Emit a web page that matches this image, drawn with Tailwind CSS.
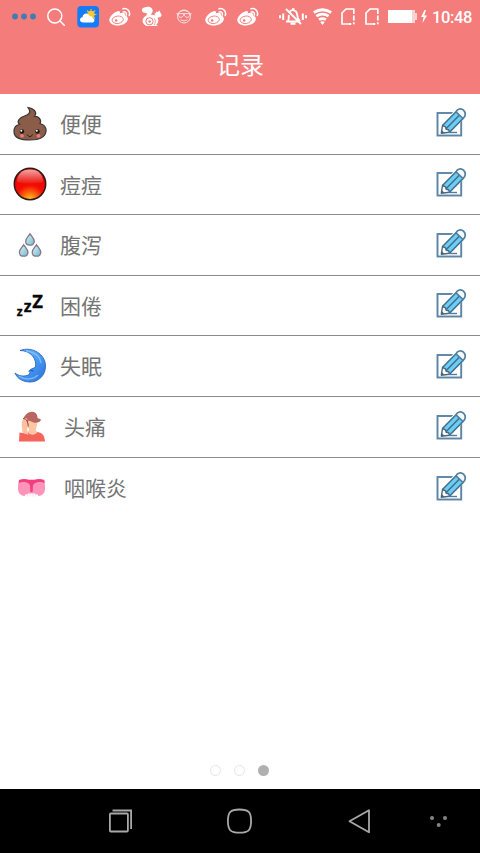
<!DOCTYPE html>
<html lang="zh-CN">
<head>
<meta charset="utf-8">
<title>记录</title>
<script src="https://cdn.jsdelivr.net/npm/@tailwindcss/browser@4"></script>
</head>
<body class="w-[480px] h-[853px] overflow-hidden bg-white flex flex-col font-['Roboto','Noto_Sans_CJK_SC',sans-serif]">
<svg class="absolute size-0" aria-hidden="true">
  <defs>
    <symbol id="weibo" viewBox="0 0 22 20">
      <path fill="#fff" d="M8.700 4.300C10.500 3.600 11.500 4.800 11 6.300c3-1.100 5.600-.6 4.900 1.900 6 2 2.600 10.300-7.400 10.300C3.500 18.500.3 16 .3 13 .3 9.500 5 5.300 8.700 4.300z"/>
      <ellipse cx="8.700" cy="12.800" rx="5.600" ry="3.700" fill="none" stroke="#f47c7b" stroke-width=".9" transform="rotate(-8 8.700 12.800)"/>
      <circle cx="7.200" cy="13.500" r="1.300" fill="#f47c7b"/>
      <path d="M14 1.800c4.500-1 7.500 2.600 6.300 6.700M14.300 4.900c2.200-.4 3.600 1.100 3 3" fill="none" stroke="#fff" stroke-width="1.500" stroke-linecap="round"/>
    </symbol>
    <symbol id="sim" viewBox="0 0 14 17">
      <path d="M12.800 6V1H5L1 5v11h7.500" fill="none" stroke="#fff" stroke-width="1.700" stroke-linejoin="round"/>
      <path d="M12.800 7.500v5M12.800 14.300v2M8 16h2.300" stroke="#fff" stroke-width="1.800"/>
    </symbol>
    <symbol id="edit" viewBox="0 0 32 32">
      <rect x="2.500" y="6" width="23.700" height="22.500" fill="#fff" stroke="#5b84a5" stroke-width="1.900"/>
      <path d="M5.500 19L20 3l10 7L15.500 26.500z" fill="#fff"/>
      <path d="M7.500 19L21 5l7 6.500-13.500 14-2.500-2-2-2.500z" fill="#6dcdf5"/>
      <path d="M7.500 18.500L21 4.800M14.500 25.300L28 11.500M10.500 22.300L24.500 8" fill="none" stroke="#41718f" stroke-width="1.600"/>
      <path d="M7.500 18.500L6.300 26.200l8.200-1-.8-2.400-2.500-.5-.7-2.500z" fill="#fff" stroke="#49697f" stroke-width="1.400" stroke-linejoin="round"/>
      <path d="M6.300 26.200l.5-3.200 2.500 2.700z" fill="#41647f"/>
      <path d="M21 4.800c1.500-3 5-3.900 7.500-1.600 2.700 2.500 2.200 6.300-.5 8.300z" fill="#f2f9fc" stroke="#527e9d" stroke-width="1.700"/>
      <path d="M14 25.500h8" stroke="#527b9c" stroke-width="1.400"/>
    </symbol>
    <linearGradient id="drop" x2="1" y2="1"><stop stop-color="#dff6f8"/><stop offset="1" stop-color="#6fb9c9"/></linearGradient>
    <linearGradient id="moon" x1="0" y1="0" x2="1" y2="1"><stop stop-color="#79bcff"/><stop offset=".5" stop-color="#4a9bf5"/><stop offset="1" stop-color="#2a70d8"/></linearGradient>
    <radialGradient id="ball" cx=".5" cy="1" r=".95"><stop stop-color="#ffc928"/><stop offset=".2" stop-color="#fb7a10"/><stop offset=".48" stop-color="#f50d03"/><stop offset="1" stop-color="#d00"/></radialGradient>
    <linearGradient id="shine" x2="0" y2="1"><stop stop-color="#fff" stop-opacity=".65"/><stop offset="1" stop-color="#fff" stop-opacity=".05"/></linearGradient>
    <path id="tear" d="M0-5.700C1.500-3.300 4.300-.8 4.300 1.800 4.300 4.200 2.400 5.700 0 5.700S-4.300 4.200-4.300 1.800C-4.300-.8-1.500-3.300 0-5.700z" fill="url(#drop)" stroke="#85768e" stroke-width="1.300"/>
  </defs>
</svg>

<header class="h-[93.500px] shrink-0 bg-[#f47c7b] text-white">
  <div class="h-[34px] flex items-center">
    <svg class="ml-3 w-6 h-[34px] shrink-0" viewBox="0 0 24 34" fill="#3f7cb3"><circle cx="3" cy="16.500" r="2.900"/><circle cx="12" cy="16.500" r="2.900"/><circle cx="21" cy="16.500" r="2.900"/></svg>
    <svg class="ml-[11px] w-[18px] h-[34px] shrink-0" viewBox="0 0 18 34" fill="none" stroke="#fff" stroke-width="1.500" stroke-linecap="round"><circle cx="7.800" cy="16" r="7"/><path d="M13 21l4.300 4.300"/></svg>
    <svg class="ml-3 w-[22px] h-[34px] shrink-0" viewBox="0 0 22 34"><rect x=".3" y="6" width="21.700" height="21.500" rx="4" fill="#137cf8"/><path d="M14 9v11M8.500 14.500h11M10 10.500l8 8M18 10.500l-8 8" stroke="#e8b83e" stroke-width="1.200"/><circle cx="14" cy="14.500" r="3.700" fill="#fbc834"/><path d="M6.500 22.500c-4.500 0-4.500-5-1-5.300.5-4.800 6-4.800 7-1.300 2.500-.2 3 1.300 3 2 3 .6 2.500 4.600-.5 4.600z" fill="#fff"/></svg>
    <svg class="ml-[10px] mt-[-1px] w-[22px] h-5 shrink-0"><use href="#weibo"/></svg>
    <svg class="ml-[10px] w-[22px] h-[34px] shrink-0" viewBox="0 0 22 34"><path fill="#fff" d="M5 7C9 6 12 8 11.700 11.300c-.2 1.700-1.700 2.400-1.700 3.500 1.500 0 3 .3 3.800.8l-.3-2 1.500-.8-.2-1.300 1.800.6 2-1.500c0 2 2 3 2 5-.5 1.700-2.300 2-4.200 2 1 1.500 1.300 3.500.4 5.200-.5 1-1 1.700-1.800 2.200l2.500 1H6c-4-1.500-5.200-4.700-4-7.300C3 16.500 5.800 16 6 14 6 12.500 2 13.500 1 11 .3 8.500 2.500 7.300 5 7z"/><circle cx="8.500" cy="21.300" r="3.600" fill="none" stroke="#f47c7b"/><circle cx="8.700" cy="21.500" r="1.200" fill="#f47c7b"/><path d="M13.500 18.500c1.200 2 1 4.500-.5 6.500" fill="none" stroke="#f47c7b" stroke-width=".8"/></svg>
    <svg class="ml-[13px] w-4 h-[34px] shrink-0 opacity-80" viewBox="0 0 16 34" fill="none" stroke="#fff"><circle cx="8" cy="16.500" r="6.500"/><path d="M.5 13.700h15M2.200 14c0 5 5.300 4 5.800 0 .5 4 5.800 5 5.800 0M4.500 19.800q3.500 2.200 7 0M4 11.300q4-1.500 8 0"/></svg>
    <svg class="ml-[13px] mt-[-1px] w-[22px] h-5 shrink-0"><use href="#weibo"/></svg>
    <svg class="ml-[10px] mt-[-1px] w-[22px] h-5 shrink-0"><use href="#weibo"/></svg>
    <svg class="ml-5 w-7 h-[34px] shrink-0" viewBox="0 0 28 34" fill="none" stroke="#fff" stroke-width="1.900"><path d="M7 21.500h13.500M9 21.500c1-2 .5-5 1-6.500M11 11.500c2-2.500 6.500-1.500 7 2.500.3 3 .5 5 3 7.500M13 9.300h2.500M7 9l15 15"/><path d="M11.500 23.500h5" stroke-width="2.500"/><path d="M4.200 13.500v6.500M1 15.300v3M23.800 13.500v6.500M27 15.300v3" stroke-width="2"/></svg>
    <svg class="ml-[6px] w-[19px] h-[34px] shrink-0" viewBox="0 0 19 34" fill="none" stroke="#fff" stroke-width="2.800"><path d="M.8 12.500Q9.500 7 18.200 12.500M3.400 16.200Q9.500 12 15.600 16.200M6 19.700Q9.500 17.400 13 19.700"/><path d="M7.300 22Q9.500 20.500 11.700 22L9.500 25z" fill="#fff" stroke="none"/></svg>
    <svg class="ml-[9px] mt-[-2px] w-[14px] h-[17px] shrink-0"><use href="#sim"/></svg>
    <svg class="ml-[10px] mt-[-2px] w-[14px] h-[17px] shrink-0"><use href="#sim"/></svg>
    <svg class="ml-[9px] w-[29px] h-[34px] shrink-0" viewBox="0 0 29 34"><path d="M0 10h27v3h2v7h-2v3H0z" fill="#fbd3d3"/><path d="M0 10h24v13H0z" fill="#fff"/></svg>
    <svg class="ml-1 w-[6px] h-[34px] shrink-0" viewBox="0 0 6 34"><path d="M3.500 10L0 17h2.500L1.500 23 6 15.500H3.300L5 10z" fill="#fff"/></svg>
    <span class="ml-[5px] mt-[2px] text-[16.500px] font-medium leading-none tracking-[-0.400px]">10:48</span>
  </div>
  <h1 class="h-[59px] flex items-center justify-center text-2xl leading-none font-['Noto_Sans_CJK_SC',sans-serif]">记录</h1>
</header>

<main class="flex-1 flex flex-col text-[21px] text-[#757575] font-['Noto_Sans_CJK_SC',sans-serif]">
  <div class="h-[61px] flex items-center border-b border-[#8a8a8a]">
    <svg class="size-[60px] shrink-0" viewBox="0 0 60 60"><path d="M28 13.500C33 14 38 18 34.500 22.500c4-.5 7.500 3.500 5.500 7 4 1 6.300 4 6 8C45 43.500 40 46 30 46s-16-2-16-8.500c0-4 2-6.500 5.500-7C16 27 20 23.500 24.500 22c3.500-1.300 7.500-3 3.500-8.500z" fill="#8b5c47" stroke="#383634" stroke-width="1.200"/><circle cx="22" cy="37.500" r="2.200" fill="#171717"/><circle cx="37.500" cy="37.500" r="2.200" fill="#171717"/><circle cx="21.300" cy="36.700" r="1" fill="#fff"/><circle cx="36.800" cy="36.700" r="1" fill="#fff"/><circle cx="22" cy="41.800" r="1.900" fill="#f27777"/><circle cx="38.500" cy="41.800" r="1.900" fill="#f27777"/><path d="M27 40.500q3 4.500 5.500 0" fill="none" stroke="#262020"/></svg>
    <span class="flex-1 pt-px">便便</span>
    <svg class="size-8 mr-[13px] mt-[-2px] shrink-0"><use href="#edit"/></svg>
  </div>
  <div class="h-[60px] flex items-center border-b border-[#8a8a8a]">
    <svg class="size-[60px] shrink-0" viewBox="0 0 60 60"><circle cx="30" cy="30" r="15.700" fill="url(#ball)" stroke="#2f1815" stroke-width="1.500"/><path d="M17 28C17 20 22 15.500 30 15.500S43 20 43 28C38 30 22 30 17 28z" fill="url(#shine)"/></svg>
    <span class="flex-1 pt-px">痘痘</span>
    <svg class="size-8 mr-[13px] mt-[-2px] shrink-0"><use href="#edit"/></svg>
  </div>
  <div class="h-[61px] flex items-center border-b border-[#8a8a8a]">
    <svg class="size-[60px] shrink-0" viewBox="0 0 60 60"><use href="#tear" x="30" y="24.500"/><use href="#tear" x="23.700" y="35.500"/><use href="#tear" x="36.500" y="35.500"/></svg>
    <span class="flex-1 pt-px">腹泻</span>
    <svg class="size-8 mr-[13px] mt-[-2px] shrink-0"><use href="#edit"/></svg>
  </div>
  <div class="h-[60px] flex items-center border-b border-[#8a8a8a]">
    <svg class="size-[60px] shrink-0 font-['Open_Sans',sans-serif] font-bold" viewBox="0 0 60 60" fill="#080808" stroke="#080808" stroke-width=".3"><text x="16.700" y="41" font-size="12">z</text><text x="23.700" y="37" font-size="16">z</text><text x="32.300" y="32.500" font-size="18.500">Z</text></svg>
    <span class="flex-1 pt-px">困倦</span>
    <svg class="size-8 mr-[13px] mt-[-2px] shrink-0"><use href="#edit"/></svg>
  </div>
  <div class="h-[61px] flex items-center border-b border-[#8a8a8a]">
    <svg class="size-[60px] shrink-0" viewBox="0 0 60 60"><path d="M20 14.500C32 10 45.500 18 45.500 30 45.500 40 38 46 30 46c-7 0-13-3.500-15-9 4 3.300 9 4 14 1.700l1-2.200-1.200-1.200 1.500-1.800 5.200-2.200C37 23 31 14.500 20 14.500z" fill="url(#moon)" stroke="#2b69bd" stroke-width=".9"/><path d="M26 15c8 .5 14 5 15 12M19 40c6 4 14 4 19-1" fill="none" stroke="#8ccaff" stroke-width="1.500" opacity=".7"/><path d="M30.500 34.500l3 .5" stroke="#174b9c"/></svg>
    <span class="flex-1 pt-px">失眠</span>
    <svg class="size-8 mr-[13px] mt-[-2px] shrink-0"><use href="#edit"/></svg>
  </div>
  <div class="h-[61px] flex items-center border-b border-[#8a8a8a]">
    <svg class="size-[60px] shrink-0" viewBox="0 0 60 60"><path d="M19 44.500l.5-9 6 1 4-1.500h8c5 1 7 3 7.500 9.500z" fill="#f4645b"/><path d="M28 34.500c1 4 7 4.500 9.500.5l-1.800-1.500V22H29v11z" fill="#fdc7a6"/><path d="M26 24c0-4 10-4 11 0 .7 4-.5 10-4.500 10S26 28 26 24z" fill="#fdc7a6"/><path d="M23.500 22C25 16 32 13 35.500 16c2 1.500 2 4 2 5 1.500.5 3 1 3.500 2-1 2.500-4.500 3.300-7.500 2.500-2-1-4-2.500-5.500-1.500l-.5 4-2.500-1z" fill="#b96661"/><path d="M22.500 35.500l-.8-8c0-3 1-6 4-6.500l1.800 1-1 2 2 4-1.500 4 1.500 6z" fill="#fdc0a0"/><path d="M23 21.500q5 0 5.300 8" fill="none" stroke="#a33f40" stroke-width="1"/></svg>
    <span class="flex-1 pl-1 pt-px">头痛</span>
    <svg class="size-8 mr-[13px] mt-[-2px] shrink-0"><use href="#edit"/></svg>
  </div>
  <div class="h-[60px] flex items-center">
    <svg class="size-[60px] shrink-0" viewBox="0 0 60 60"><rect x="18" y="21.500" width="27" height="16.500" rx="6.500" fill="#ff94ba"/><path d="M19 22c4-1.500 7-1.200 9.500 0h6c3-1.500 6.500-1.500 9.800 0l.5 3.500c-3-2-8-2-11 .5l-1 2v5c0 1.500-2.600 1.500-2.600 0v-5l-1-2c-3-2.500-7.500-2.500-10.700-.5z" fill="#f43d7e"/><path d="M24.500 38.700l.7-2.300 2.300-.2.500-.8h7l.5.8 2.300.2.700 2.300z" fill="#fff"/><path d="M27.700 36v2.500M30 35.500v3M33 35.500v3M35.300 36v2.500" stroke="#f3bfd0" stroke-width=".5"/></svg>
    <span class="flex-1 pl-1 pt-px">咽喉炎</span>
    <svg class="size-8 mr-[13px] mt-[-1px] shrink-0"><use href="#edit"/></svg>
  </div>
  <div class="mt-auto mb-[13px] mr-px flex justify-center gap-[13px]">
    <i class="size-[11px] rounded-full border-[1.500px] border-[#e5e5e5]"></i>
    <i class="size-[11px] rounded-full border-[1.500px] border-[#e5e5e5]"></i>
    <i class="size-[11px] rounded-full bg-[#b0b0b0]"></i>
  </div>
</main>

<nav class="h-16 shrink-0 bg-black flex items-center">
  <svg class="ml-[108px] w-6 h-16 shrink-0" viewBox="0 0 24 64" fill="none" stroke="#a8a8a8" stroke-width="1.800"><rect x="1.900" y="24.500" width="18" height="18" rx="1"/><path d="M4.500 21.500h18.600v18.500"/></svg>
  <svg class="ml-[94px] w-[27px] h-16 shrink-0" viewBox="0 0 27 64" fill="none" stroke="#a8a8a8" stroke-width="1.800"><path d="M13.500 20.500c9 0 11.600 2.300 11.600 11.600s-2.600 11.600-11.600 11.600S1.900 41.400 1.900 32.100 4.500 20.500 13.500 20.500z"/></svg>
  <svg class="ml-[94px] w-6 h-16 shrink-0" viewBox="0 0 24 64" fill="none" stroke="#a8a8a8" stroke-width="1.800" stroke-linejoin="round"><path d="M22 21.300v22L2.500 32.300z"/></svg>
  <svg class="ml-[58px] w-5 h-16 shrink-0" viewBox="0 0 20 64" fill="#858585"><circle cx="3" cy="29" r="2"/><circle cx="16" cy="29" r="2"/><circle cx="9.700" cy="36" r="2"/></svg>
</nav>
</body>
</html>
